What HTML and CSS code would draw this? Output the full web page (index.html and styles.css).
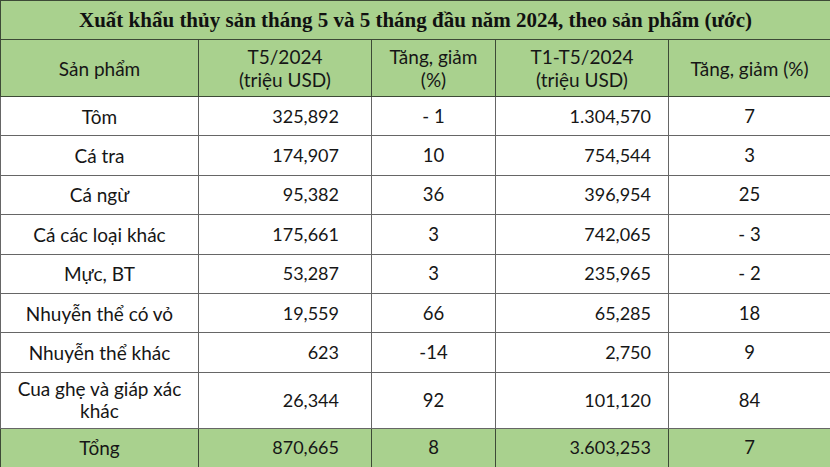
FILE: index.html
```html
<!DOCTYPE html>
<html lang="vi">
<head>
<meta charset="utf-8">
<link rel="stylesheet" href="styles.css">
</head>
<body>
<table class="tbl">
  <colgroup>
    <col class="c1"><col class="c2"><col class="c3"><col class="c4"><col class="c5">
  </colgroup>
  <tr class="title-row"><td colspan="5" class="title">Xuất khẩu thủy sản tháng 5 và 5 tháng đầu năm 2024, theo sản phẩm (ước)</td></tr>
  <tr class="head-row">
    <td class="ctr">Sản phẩm</td>
    <td class="ctr">T5/2024<br>(triệu USD)</td>
    <td class="ctr">Tăng, giảm<br>(%)</td>
    <td class="ctr">T1-T5/2024<br>(triệu USD)</td>
    <td class="ctr">Tăng, giảm (%)</td>
  </tr>
  <tr class="row"><td class="ctr">Tôm</td><td class="num1">325,892</td><td class="mid">- 1</td><td class="num2">1.304,570</td><td class="mid">7</td></tr>
  <tr class="row"><td class="ctr">Cá tra</td><td class="num1">174,907</td><td class="mid">10</td><td class="num2">754,544</td><td class="mid">3</td></tr>
  <tr class="row"><td class="ctr">Cá ngừ</td><td class="num1">95,382</td><td class="mid">36</td><td class="num2">396,954</td><td class="mid">25</td></tr>
  <tr class="row"><td class="ctr">Cá các loại khác</td><td class="num1">175,661</td><td class="mid">3</td><td class="num2">742,065</td><td class="mid">- 3</td></tr>
  <tr class="row"><td class="ctr">Mực, BT</td><td class="num1">53,287</td><td class="mid">3</td><td class="num2">235,965</td><td class="mid">- 2</td></tr>
  <tr class="row"><td class="ctr">Nhuyễn thể có vỏ</td><td class="num1">19,559</td><td class="mid">66</td><td class="num2">65,285</td><td class="mid">18</td></tr>
  <tr class="row"><td class="ctr">Nhuyễn thể khác</td><td class="num1">623</td><td class="mid">-14</td><td class="num2">2,750</td><td class="mid">9</td></tr>
  <tr class="row tall"><td class="ctr wrap">Cua ghẹ và giáp xác<br>khác</td><td class="num1">26,344</td><td class="mid">92</td><td class="num2">101,120</td><td class="mid">84</td></tr>
  <tr class="total-row"><td class="ctr">Tổng</td><td class="num1">870,665</td><td class="mid">8</td><td class="num2">3.603,253</td><td class="mid">7</td></tr>
</table>
</body>
</html>
```
FILE: styles.css
```css
html, body {
  margin: 0;
  padding: 0;
  background: #ffffff;
}
.tbl {
  border-collapse: collapse;
  table-layout: fixed;
  width: 830px;
  font-family: Lato, "Open Sans", sans-serif;
  font-size: 19px;
  color: #161616;
}
.c1 { width: 198px; }
.c2 { width: 173px; }
.c3 { width: 124px; }
.c4 { width: 173px; }
.c5 { width: 162px; }
.tbl td {
  border: 1px solid #666666;
  padding: 0;
  line-height: 23px;
  vertical-align: middle;
  white-space: nowrap;
}
.title-row td {
  height: 38px;
  background: #a9d18e;
  border-color: #3d4a36;
}
.title {
  font-family: "Liberation Serif", serif;
  font-weight: bold;
  font-size: 21px;
  text-align: center;
  color: #111;
}
.head-row td {
  height: 56px;
  background: #a9d18e;
  border-color: #3d4a36;
}
.row td { height: 38.4px; }
.row.tall td { height: 55px; }
.wrap { line-height: 22px !important; }
.total-row td {
  height: 38px;
  background: #a9d18e;
  border-color: #3d4a36;
}
.ctr { text-align: center; }
.mid { text-align: center; font-size: 18.5px; }
.num1 { text-align: right; font-size: 18px; padding-right: 32px !important; }
.num2 { text-align: right; font-size: 18px; padding-right: 17px !important; }
```
